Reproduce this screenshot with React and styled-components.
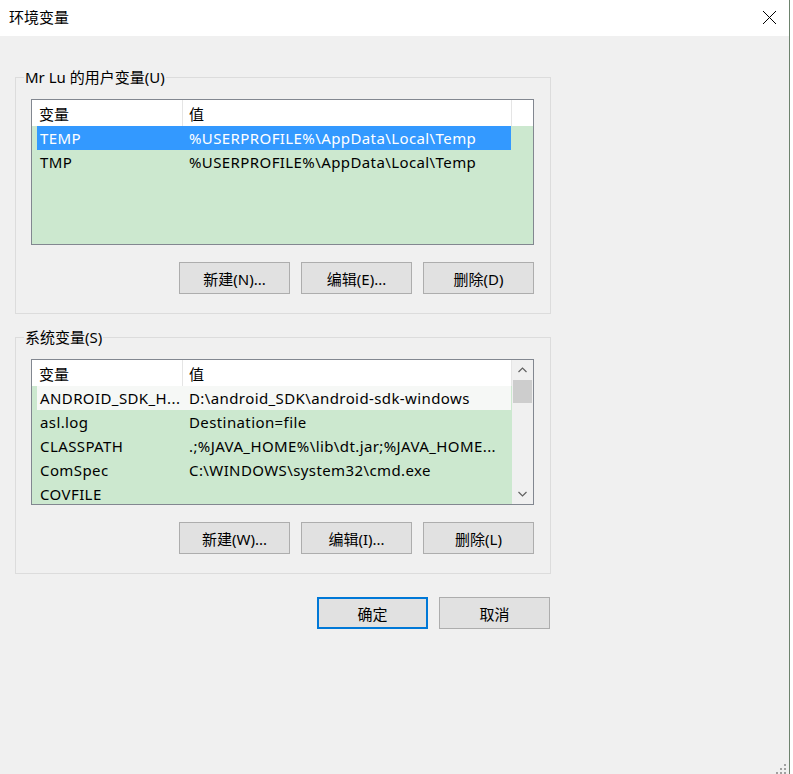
import React from "react";
import styled, { createGlobalStyle } from "styled-components";

const GlobalStyle = createGlobalStyle`
  html, body { margin: 0; padding: 0; background: #ffffff; }
  body {
    font-family: "Noto Sans", "Noto Sans CJK SC", sans-serif;
    font-size: 15px;
    color: #000;
  }
  * { box-sizing: border-box; }
`;

const Window = styled.div`
  position: relative;
  width: 790px;
  height: 774px;
  background: #f0f0f0;
  border-right: 1px solid #6d826d;
  display: flex;
  flex-direction: column;
`;

const TitleBar = styled.div`
  height: 36px;
  background: #ffffff;
  display: flex;
  align-items: center;
  justify-content: space-between;
  padding: 0 12px 2px 9px;
  flex-shrink: 0;
`;

const Title = styled.span`
  font-family: "Noto Sans CJK SC", sans-serif;
  font-size: 15px;
  line-height: 20px;
`;

const CloseButton = styled.div`
  width: 16px;
  height: 16px;
  display: flex;
  align-items: center;
  justify-content: center;
`;

const Content = styled.div`
  display: flex;
  flex-direction: column;
  padding: 41px 0 0 15px;
`;

const Group = styled.div`
  position: relative;
  width: 536px;
  border: 1px solid #dcdcdc;
  padding: 21px 16px 19px 15px;
  margin-bottom: ${(p) => p.$mb || 0}px;
`;

const Legend = styled.span`
  position: absolute;
  top: -12px;
  left: 8px;
  padding: 0 1px;
  background: #f0f0f0;
  line-height: 22px;
  font-size: 15px;
`;

const List = styled.div`
  height: 146px;
  border: 1px solid #828790;
  background: #cce8cf;
  display: flex;
  overflow: hidden;
`;

const ListBody = styled.div`
  flex: 1;
  min-width: 0;
  display: flex;
  flex-direction: column;
`;

const Header = styled.div`
  display: flex;
  height: 26px;
  background: #ffffff;
  flex-shrink: 0;
`;

const HeaderCell = styled.div`
  width: ${(p) => p.$w}px;
  flex-shrink: 0;
  padding-left: ${(p) => p.$pl}px;
  border-right: 1px solid #e5e5e5;
  display: flex;
  align-items: center;
  white-space: nowrap;
`;

const HeaderFill = styled.div`
  flex: 1;
`;

const Row = styled.div`
  display: flex;
  height: 24px;
  flex-shrink: 0;
  margin-left: 5px;
  width: 474px;
  align-items: center;
  white-space: nowrap;
  letter-spacing: 0.4px;
  background: ${(p) =>
    p.$state === "selected" ? "#3399ff" : p.$state === "light" ? "#f6f8f6" : "transparent"};
  color: ${(p) => (p.$state === "selected" ? "#ffffff" : "#000")};
`;

const NameCell = styled.div`
  width: 146px;
  padding-left: 3px;
  flex-shrink: 0;
  overflow: hidden;
`;

const ValueCell = styled.div`
  flex: 1;
  padding-left: 6px;
  overflow: hidden;
`;

const Scrollbar = styled.div`
  width: 21px;
  flex-shrink: 0;
  background: #f0f0f0;
  display: flex;
  flex-direction: column;
`;

const ScrollArrow = styled.div`
  height: 20px;
  display: flex;
  align-items: center;
  justify-content: center;
`;

const Thumb = styled.div`
  height: 23px;
  margin: 0 1px;
  background: #cdcdcd;
`;

const ScrollSpace = styled.div`
  flex: 1;
`;

const ButtonRow = styled.div`
  display: flex;
  justify-content: flex-end;
  gap: 11px;
  margin-top: ${(p) => p.$mt || 0}px;
  width: ${(p) => (p.$w ? `${p.$w}px` : "auto")};
`;

const Button = styled.div`
  width: 111px;
  height: 32px;
  background: #e1e1e1;
  border: ${(p) => (p.$default ? "2px solid #0078d7" : "1px solid #adadad")};
  display: flex;
  align-items: center;
  justify-content: center;
  font-size: 15px;
  white-space: nowrap;
`;

const Grip = styled.div`
  position: absolute;
  right: 2px;
  bottom: 2px;
  width: 13px;
  height: 13px;
`;

const userVars = [
  { name: "TEMP", value: "%USERPROFILE%\\AppData\\Local\\Temp", state: "selected" },
  { name: "TMP", value: "%USERPROFILE%\\AppData\\Local\\Temp" },
];

const sysVars = [
  { name: "ANDROID_SDK_H...", value: "D:\\android_SDK\\android-sdk-windows", state: "light" },
  { name: "asl.log", value: "Destination=file" },
  { name: "CLASSPATH", value: ".;%JAVA_HOME%\\lib\\dt.jar;%JAVA_HOME..." },
  { name: "ComSpec", value: "C:\\WINDOWS\\system32\\cmd.exe" },
  { name: "COVFILE", value: "" },
];

function Chevron({ up }) {
  return (
    <svg width="9" height="6" viewBox="0 0 9 6">
      <polyline
        points={up ? "0.5,5 4.5,1 8.5,5" : "0.5,1 4.5,5 8.5,1"}
        fill="none"
        stroke="#606060"
        strokeWidth="1.2"
      />
    </svg>
  );
}

function VarList({ rows, scroll }) {
  return (
    <List>
      <ListBody>
        <Header>
          <HeaderCell $w={151} $pl={7}>变量</HeaderCell>
          <HeaderCell $w={329} $pl={6}>值</HeaderCell>
          {!scroll && <HeaderFill />}
        </Header>
        {rows.map((r) => (
          <Row key={r.name} $state={r.state}>
            <NameCell>{r.name}</NameCell>
            <ValueCell>{r.value}</ValueCell>
          </Row>
        ))}
      </ListBody>
      {scroll && (
        <Scrollbar>
          <ScrollArrow>
            <Chevron up />
          </ScrollArrow>
          <Thumb />
          <ScrollSpace />
          <ScrollArrow>
            <Chevron />
          </ScrollArrow>
        </Scrollbar>
      )}
    </List>
  );
}

export default function App() {
  return (
    <>
      <GlobalStyle />
      <Window>
        <TitleBar>
          <Title>环境变量</Title>
          <CloseButton>
            <svg width="15" height="15" viewBox="0 0 15 15">
              <path d="M1 1 L14 14 M14 1 L1 14" stroke="#000" strokeWidth="1" fill="none" />
            </svg>
          </CloseButton>
        </TitleBar>
        <Content>
          <Group $mb={23}>
            <Legend>Mr Lu 的用户变量(U)</Legend>
            <VarList rows={userVars} />
            <ButtonRow $mt={17}>
              <Button>新建(N)...</Button>
              <Button>编辑(E)...</Button>
              <Button>删除(D)</Button>
            </ButtonRow>
          </Group>
          <Group $mb={23}>
            <Legend>系统变量(S)</Legend>
            <VarList rows={sysVars} scroll />
            <ButtonRow $mt={17}>
              <Button>新建(W)...</Button>
              <Button>编辑(I)...</Button>
              <Button>删除(L)</Button>
            </ButtonRow>
          </Group>
          <ButtonRow $w={535}>
            <Button $default>确定</Button>
            <Button>取消</Button>
          </ButtonRow>
        </Content>
        <Grip>
          <svg width="13" height="13" viewBox="0 0 13 13">
            {[
              [10, 2],
              [6, 6],
              [10, 6],
              [2, 10],
              [6, 10],
              [10, 10],
            ].map(([x, y]) => (
              <rect key={`${x}-${y}`} x={x} y={y} width="2" height="2" fill="#a0a0a0" />
            ))}
          </svg>
        </Grip>
      </Window>
    </>
  );
}
